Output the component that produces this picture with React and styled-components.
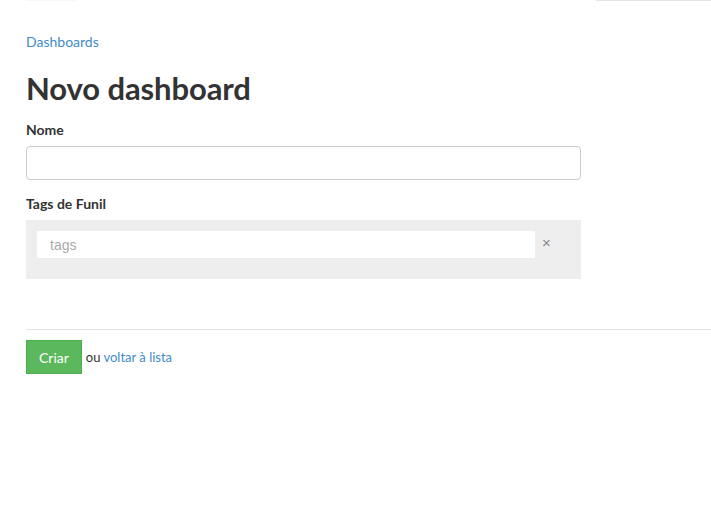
import styled, { createGlobalStyle } from "styled-components";

const GlobalStyle = createGlobalStyle`
  body {
    margin: 0;
    background: #fff;
    font-family: Lato, "Open Sans", "Liberation Sans", sans-serif;
    color: #333;
  }
`;

const TopStrip = styled.div`
  display: flex;
  justify-content: space-between;
  height: 1px;
`;
const TopLine = styled.div`
  width: ${props => props.width}px;
  margin-left: ${props => props.offset || 0}px;
  background: ${props => props.color};
`;

const Page = styled.div`
  padding: 32px 0 0 26px;
`;
const Crumb = styled.a`
  display: block;
  font-size: 14px;
  color: #428bca;
  text-decoration: none;
  line-height: 18px;
`;
const Title = styled.h1`
  margin: 19px 0 15px;
  font-size: 31px;
  font-weight: 700;
  line-height: 36px;
  letter-spacing: -0.1px;
  color: #333;
`;
const Form = styled.div`
  width: 555px;
`;
const Label = styled.label`
  display: block;
  font-size: 14px;
  font-weight: 700;
  line-height: 18px;
  margin-bottom: 7px;
`;
const Field = styled.div`
  margin-bottom: 15px;
`;
const TextInput = styled.input`
  display: block;
  box-sizing: border-box;
  width: 100%;
  height: 34px;
  border: 1px solid #ccc;
  border-radius: 4px;
  padding: 6px 12px;
  font: inherit;
  font-size: 14px;
  outline: none;
`;
const TagsBox = styled.div`
  display: flex;
  align-items: flex-start;
  background: #eee;
  height: 59px;
  box-sizing: border-box;
  padding: 11px 0 0 11px;
`;
const TagsInput = styled.input`
  width: 498px;
  height: 27px;
  box-sizing: border-box;
  border: 0;
  padding: 0 13px;
  font-family: "Liberation Sans", Arial, sans-serif;
  font-size: 14px;
  outline: none;
  &::placeholder {
    color: #aaa;
  }
`;
const Clear = styled.span`
  margin-left: 7px;
  font-family: "Liberation Sans", Arial, sans-serif;
  font-size: 15px;
  line-height: 24px;
  color: #888;
`;
const Divider = styled.hr`
  border: 0;
  border-top: 1px solid #e5e5e5;
  margin: 50px 0 10px;
`;
const Actions = styled.div`
  display: flex;
  align-items: center;
  gap: 4px;
  font-size: 13px;
`;
const Button = styled.button`
  height: 34px;
  padding: 0 12px;
  background: #5cb85c;
  border: 1px solid #4cae4c;
  color: #fff;
  font-family: inherit;
  font-size: 14px;
`;
const Link = styled.a`
  color: #428bca;
  text-decoration: none;
`;

export default function App() {
  return (
    <>
      <GlobalStyle />
      <TopStrip>
        <TopLine width={50} offset={26} color="#f7f7f7" />
        <TopLine width={115} color="#e6e6e6" />
      </TopStrip>
      <Page>
        <Crumb href="#">Dashboards</Crumb>
        <Title>Novo dashboard</Title>
        <Form>
          <Field>
            <Label>Nome</Label>
            <TextInput type="text" />
          </Field>
          <Field>
            <Label>Tags de Funil</Label>
            <TagsBox>
              <TagsInput placeholder="tags" />
              <Clear>×</Clear>
            </TagsBox>
          </Field>
        </Form>
        <Divider />
        <Actions>
          <Button>Criar</Button>
          <span>ou <Link href="#">voltar à lista</Link></span>
        </Actions>
      </Page>
    </>
  );
}
